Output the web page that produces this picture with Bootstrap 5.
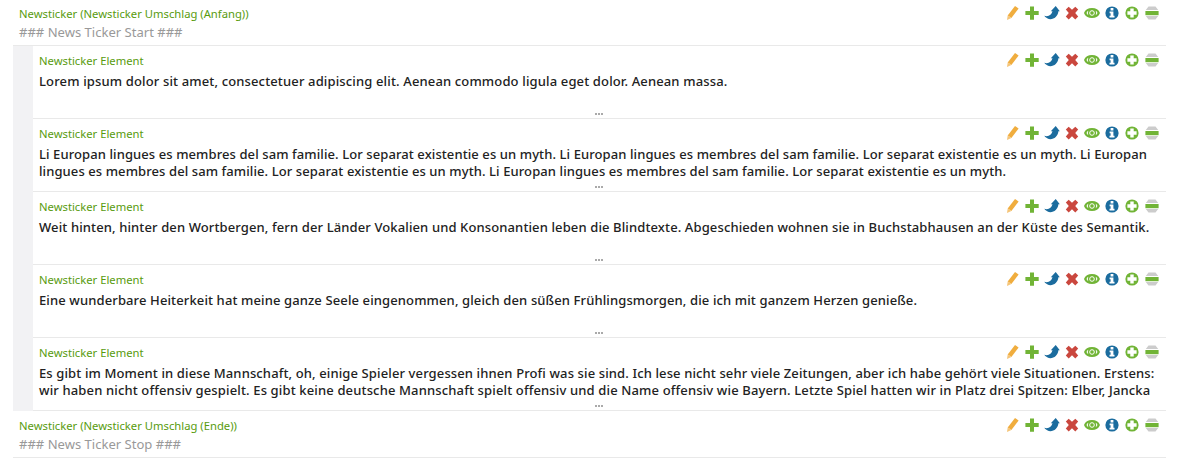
<!DOCTYPE html>
<html lang="de">
<head>
<meta charset="utf-8">
<meta name="viewport" content="width=device-width, initial-scale=1">
<title>Newsticker</title>
<link href="https://cdn.jsdelivr.net/npm/bootstrap@5.3.0/dist/css/bootstrap.min.css" rel="stylesheet">
<style>
body{font-family:"Noto Sans","Open Sans",sans-serif;color:#222;background:#fff;overflow:hidden}
.ticker-list{margin:0 11px 0 13px}
.wrap-row{height:47px;padding:5px 5px 0 6px;border-bottom:1px solid #e9e9e9}
.wrap-row.first{height:46px;padding-top:4px}
.group-area{border-left:20px solid #f2f2f4}
.item-row{height:73px;padding:5px 5px 0 6px;border-bottom:1px solid #e9e9e9;position:relative}
.type-label{font-size:11.25px;line-height:20px;color:#589b0e}
.note{font-size:13.05px;line-height:17px;color:#999}
.copy{font-size:13px;font-weight:500;line-height:17px;margin-top:2px;white-space:nowrap}
.copy span{display:block;width:max-content;letter-spacing:.12px}
.copy .loose{letter-spacing:.143px}
.copy .tight{letter-spacing:.092px}
.tools{gap:4px;height:16px;margin:1px 1px 0 0}
.tools svg{width:16px;height:16px;display:block}
.more{left:0;right:0;bottom:3px;height:2px;gap:1px;margin-left:-2px}
.more i{width:2px;height:2px;background:#aaa}
</style>
</head>
<body>
<svg class="d-none" aria-hidden="true">
<symbol id="pen" viewBox="0 0 16 16"><path d="M11 1 14.600 3.500 7.400 13 3.700 10.500z" fill="#f0ad3e"/><path d="m3.700 10.500 3.700 2.500-4.400 2z" fill="#f5c579"/></symbol>
<symbol id="plus" viewBox="0 0 16 16"><path d="M6 1.600h4v4.500h4.700v4H10v4.600H6v-4.600H1.400v-4H6z" fill="#71b436"/></symbol>
<symbol id="move" viewBox="0 0 16 16"><path d="M.2 10.800c4.500 1.200 7.300-.8 8.300-4.600H6.800L11.700 1l4.100 5.200H14.400C13.800 13.300 5.400 17.400.2 10.800z" fill="#1b6c9e"/></symbol>
<symbol id="cross" viewBox="0 0 16 16"><path d="M1.800 4.500 4.700 1.700 8 4.800 11.300 1.700 14.200 4.500 11.200 8 14.200 11.600 11.300 14.400 8 11.300 4.700 14.400 1.800 11.600 4.800 8z" fill="#ca473e"/></symbol>
<symbol id="eye" viewBox="0 0 16 16"><path d="M0 8C1.200 4.600 4 3 8 3s6.800 1.600 8 5c-1.200 3.400-4 5-8 5S1.200 11.400 0 8z" fill="#71b436"/><path d="M4.300 5.800Q.9 8 4.300 10.200 3.300 8 4.300 5.800zM11.700 5.800Q15.100 8 11.700 10.200 12.700 8 11.700 5.800z" fill="#fff"/><circle cx="8" cy="8" r="2.300" fill="none" stroke="#fff" stroke-width="1"/></symbol>
<symbol id="info" viewBox="0 0 16 16"><circle cx="8" cy="8" r="6.600" fill="#1b6c9e"/><path d="M6.600 3h2.800v2.500H6.600zM5.600 6.500h3.800v4.200h1.100v1.800H5.500v-1.800h1.100V8.300h-1z" fill="#fff"/></symbol>
<symbol id="add" viewBox="0 0 16 16"><circle cx="8" cy="8" r="6.600" fill="#71b436"/><path d="M6.300 3.400h3.400v2.900h2.900v3.400H9.700v2.900H6.300V9.700H3.400V6.300h2.900z" fill="#fff"/></symbol>
<symbol id="drag" viewBox="0 0 16 16"><path d="M4.500 1.500h7l2.700 3.500H1.800zM1.800 11h12.400l-2.700 3.500h-7z" fill="#ccc"/><path d="M1.400 6h13.200v4.200H1.400z" fill="#71b436"/></symbol>
</svg>
<main class="ticker-list">
<section class="wrap-row first"><div class="d-flex justify-content-between"><span class="type-label">Newsticker (Newsticker Umschlag (Anfang))</span><span class="tools d-flex"></span></div><div class="note">### News Ticker Start ###</div></section>
<div class="group-area">
<article class="item-row"><div class="d-flex justify-content-between"><span class="type-label">Newsticker Element</span><span class="tools d-flex"></span></div><div class="copy"><span class="loose">Lorem ipsum dolor sit amet, consectetuer adipiscing elit. Aenean commodo ligula eget dolor. Aenean massa.</span></div></article>
<article class="item-row"><div class="d-flex justify-content-between"><span class="type-label">Newsticker Element</span><span class="tools d-flex"></span></div><div class="copy"><span class="tight">Li Europan lingues es membres del sam familie. Lor separat existentie es un myth. Li Europan lingues es membres del sam familie. Lor separat existentie es un myth. Li Europan</span><span class="tight">lingues es membres del sam familie. Lor separat existentie es un myth. Li Europan lingues es membres del sam familie. Lor separat existentie es un myth.</span></div></article>
<article class="item-row"><div class="d-flex justify-content-between"><span class="type-label">Newsticker Element</span><span class="tools d-flex"></span></div><div class="copy"><span>Weit hinten, hinter den Wortbergen, fern der Länder Vokalien und Konsonantien leben die Blindtexte. Abgeschieden wohnen sie in Buchstabhausen an der Küste des Semantik.</span></div></article>
<article class="item-row"><div class="d-flex justify-content-between"><span class="type-label">Newsticker Element</span><span class="tools d-flex"></span></div><div class="copy"><span>Eine wunderbare Heiterkeit hat meine ganze Seele eingenommen, gleich den süßen Frühlingsmorgen, die ich mit ganzem Herzen genieße.</span></div></article>
<article class="item-row"><div class="d-flex justify-content-between"><span class="type-label">Newsticker Element</span><span class="tools d-flex"></span></div><div class="copy"><span>Es gibt im Moment in diese Mannschaft, oh, einige Spieler vergessen ihnen Profi was sie sind. Ich lese nicht sehr viele Zeitungen, aber ich habe gehört viele Situationen. Erstens:</span><span class="loose">wir haben nicht offensiv gespielt. Es gibt keine deutsche Mannschaft spielt offensiv und die Name offensiv wie Bayern. Letzte Spiel hatten wir in Platz drei Spitzen: Elber, Jancka</span></div></article>
</div>
<section class="wrap-row"><div class="d-flex justify-content-between"><span class="type-label">Newsticker (Newsticker Umschlag (Ende))</span><span class="tools d-flex"></span></div><div class="note">### News Ticker Stop ###</div></section>
</main>
<script>
for (const t of document.querySelectorAll('.tools'))
  t.innerHTML = ['pen','plus','move','cross','eye','info','add','drag'].map(n => `<svg><use href="#${n}"/></svg>`).join('');
for (const r of document.querySelectorAll('.item-row'))
  r.insertAdjacentHTML('beforeend', '<div class="more position-absolute d-flex justify-content-center"><i></i><i></i><i></i></div>');
</script>
<script src="https://cdn.jsdelivr.net/npm/bootstrap@5.3.0/dist/js/bootstrap.bundle.min.js"></script>
</body>
</html>
